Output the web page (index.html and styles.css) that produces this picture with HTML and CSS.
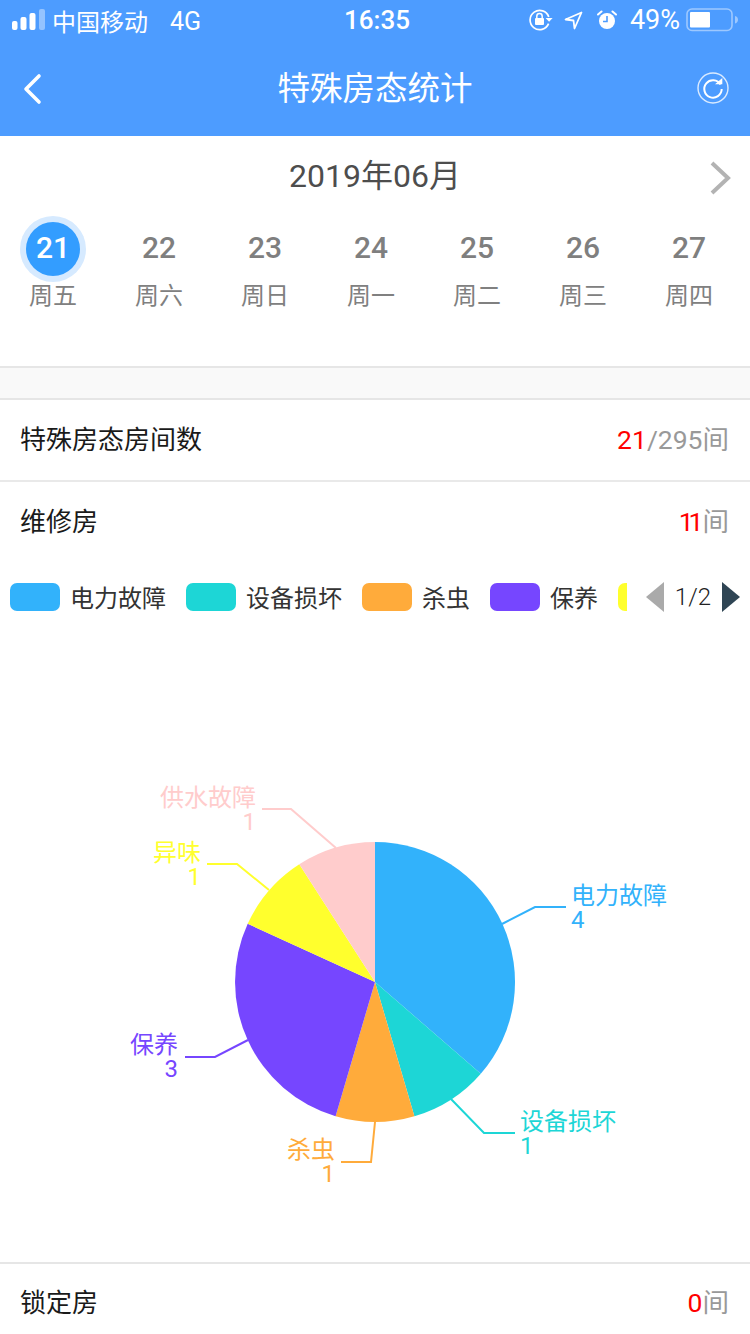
FILE: index.html
```html
<!DOCTYPE html>
<html lang="zh">
<head>
<meta charset="utf-8">
<title>特殊房态统计</title>
<link rel="stylesheet" href="styles.css">
</head>
<body>
<div class="page">
  <header class="header">
    <div class="status">
      <div class="status-left">
        <svg class="signal" width="34" height="22" viewBox="0 0 34 22">
          <rect x="0" y="12" width="5.5" height="9" rx="2" fill="#fff"/>
          <rect x="8.5" y="8" width="6" height="13" rx="2" fill="#fff"/>
          <rect x="17.5" y="4" width="6" height="17" rx="2" fill="#fff"/>
          <rect x="27" y="0" width="6" height="21" rx="2" fill="#fff" fill-opacity=".4"/>
        </svg>
        <span class="carrier">中国移动</span>
        <span class="net">4G</span>
      </div>
      <div class="time">16:35</div>
      <div class="status-right">
        <svg width="24" height="22" viewBox="0 0 24 22">
          <path d="M19.6 14.6A9.6 9.6 0 1 1 19.8 8" fill="none" stroke="#fff" stroke-width="1.7"/>
          <path d="M16.6 9h7l-3.5 3.8z" fill="#fff"/>
          <rect x="6" y="9" width="9" height="7" rx="1" fill="#fff"/>
          <path d="M7.8 9V7.2a2.7 2.7 0 0 1 5.4 0V9" fill="none" stroke="#fff" stroke-width="1.5"/>
        </svg>
        <svg class="ic-loc" width="19" height="19" viewBox="0 0 19 19">
          <path d="M17.5 1.5 1.500 8.500l8 1 1 8z" fill="none" stroke="#fff" stroke-width="1.8" stroke-linejoin="round"/>
        </svg>
        <svg class="ic-alarm" width="20" height="20" viewBox="0 0 20 20">
          <circle cx="10" cy="11" r="8" fill="#fff"/>
          <path d="M10 6v5.500H6" fill="none" stroke="#4d9cff" stroke-width="1.6"/>
          <path d="M1 4.500 4.500 1.500M19 4.500 15.500 1.500" stroke="#fff" stroke-width="2" stroke-linecap="round"/>
        </svg>
        <span class="pct">49%</span>
        <svg class="ic-batt" width="53" height="24" viewBox="0 0 53 24">
          <rect x="1" y="1" width="45" height="21.5" rx="5" fill="none" stroke="#fff" stroke-opacity=".45" stroke-width="1.6"/>
          <rect x="4" y="4" width="20" height="15.5" rx="1" fill="#fff"/>
          <path d="M49 8c2 .4 3 2 3 3.700s-1 3.300-3 3.700z" fill="#fff" fill-opacity=".45"/>
        </svg>
      </div>
    </div>
    <nav class="nav">
      <svg class="nav-back" width="20" height="34" viewBox="0 0 20 34">
        <path d="M17 4 4 17l13 13" fill="none" stroke="#fff" stroke-width="3.600" stroke-linecap="round" stroke-linejoin="round"/>
      </svg>
      <h1 class="nav-title">特殊房态统计</h1>
      <svg class="nav-refresh" width="32" height="32" viewBox="0 0 32 32">
        <circle cx="16" cy="16" r="15" fill="none" stroke="#fff" stroke-opacity=".8" stroke-width="1.400"/>
        <path d="M23.500 12.500A8.700 8.700 0 1 0 24.700 17" fill="none" stroke="#fff" stroke-width="2"/>
        <path d="M18 12.300h7.300V6z" fill="#fff"/>
      </svg>
    </nav>
  </header>

  <section class="calendar">
    <div class="month">
      <span class="month-label">2019年06月</span>
      <svg class="month-next" width="22" height="34" viewBox="0 0 22 34">
        <path d="M3 2l16 15L3 32" fill="none" stroke="#b3b3b3" stroke-width="4"/>
      </svg>
    </div>
    <div class="week">
      <div class="day"><span class="num num-on">21</span><span class="wd">周五</span></div>
      <div class="day"><span class="num">22</span><span class="wd">周六</span></div>
      <div class="day"><span class="num">23</span><span class="wd">周日</span></div>
      <div class="day"><span class="num">24</span><span class="wd">周一</span></div>
      <div class="day"><span class="num">25</span><span class="wd">周二</span></div>
      <div class="day"><span class="num">26</span><span class="wd">周三</span></div>
      <div class="day"><span class="num">27</span><span class="wd">周四</span></div>
    </div>
  </section>

  <div class="spacer"></div>

  <div class="row row-line">
    <span>特殊房态房间数</span>
    <span class="val"><em>21</em>/295间</span>
  </div>
  <div class="row">
    <span>维修房</span>
    <span class="val"><em class="ones">11</em>间</span>
  </div>

  <div class="legend">
    <div class="legend-items">
      <div class="lg"><i class="sw c-blue"></i>电力故障</div>
      <div class="lg"><i class="sw c-teal"></i>设备损坏</div>
      <div class="lg"><i class="sw c-orange"></i>杀虫</div>
      <div class="lg"><i class="sw c-purple"></i>保养</div>
      <div class="lg"><i class="sw c-yellow"></i>异味</div>
    </div>
    <div class="pager">
      <svg width="18" height="30" viewBox="0 0 18 30"><path d="M18 0v30L0 15z" fill="#aaa"/></svg>
      <span>1/2</span>
      <svg width="18" height="30" viewBox="0 0 18 30"><path d="M0 0v30l18-15z" fill="#2f4554"/></svg>
    </div>
  </div>

  <svg class="chart" width="750" height="651" viewBox="0 611 750 651">
    <g>
      <path d="M375 982V842A140 140 0 0 1 480.800 1073.700z" fill="#32b2fb"/>
      <path d="M375 982 480.800 1073.700A140 140 0 0 1 414.400 1116.300z" fill="#1dd6d6"/>
      <path d="M375 982 414.400 1116.300A140 140 0 0 1 335.600 1116.300z" fill="#ffab3b"/>
      <path d="M375 982 335.600 1116.300A140 140 0 0 1 247.700 923.800z" fill="#7646ff"/>
      <path d="M375 982 247.700 923.800A140 140 0 0 1 299.300 864.200z" fill="#ffff2d"/>
      <path d="M375 982 299.300 864.200A140 140 0 0 1 375 842z" fill="#ffcccc"/>
    </g>
    <g fill="none" stroke-width="2">
      <path d="M502 924 535 907H566" stroke="#32b2fb"/>
      <path d="M451 1099 484 1133H515" stroke="#1dd6d6"/>
      <path d="M375 1122 371 1162H341" stroke="#ffab3b"/>
      <path d="M248 1040 215 1057H185" stroke="#7646ff"/>
      <path d="M269 890 237 864H207" stroke="#ffff2d"/>
      <path d="M336 848 291 809H262" stroke="#ffcccc"/>
    </g>
    <g class="lbl">
      <text x="571" y="904" fill="#32b2fb">电力故障</text>
      <text x="571" y="928" fill="#32b2fb">4</text>
      <text x="520" y="1130" fill="#1dd6d6">设备损坏</text>
      <text x="520" y="1154" fill="#1dd6d6">1</text>
      <text x="335" y="1158" fill="#ffab3b" text-anchor="end">杀虫</text>
      <text x="335" y="1182" fill="#ffab3b" text-anchor="end">1</text>
      <text x="178" y="1053" fill="#7646ff" text-anchor="end">保养</text>
      <text x="178" y="1077" fill="#7646ff" text-anchor="end">3</text>
      <text x="201" y="861" fill="#ffff2d" text-anchor="end">异味</text>
      <text x="201" y="885" fill="#ffff2d" text-anchor="end">1</text>
      <text x="256" y="806" fill="#ffcccc" text-anchor="end">供水故障</text>
      <text x="256" y="830" fill="#ffcccc" text-anchor="end">1</text>
    </g>
  </svg>

  <div class="row row-top">
    <span>锁定房</span>
    <span class="val"><em>0</em>间</span>
  </div>
</div>
</body>
</html>
```

FILE: styles.css
```css
* { box-sizing: border-box; }
html, body { margin: 0; padding: 0; background: #fff; }
body { font-family: Roboto, "Noto Sans CJK SC", sans-serif; }
.page { width: 750px; height: 1334px; overflow: hidden; }

.header { background: #4d9cff; color: #fff; height: 136px; }
.status { height: 40px; display: grid; grid-template-columns: 1fr auto 1fr; align-items: center; padding: 0 15px 0 12px; font-size: 24px; }
.status-left { display: flex; align-items: center; }
.carrier { margin-left: 6px; }
.net { margin-left: 22px; font-size: 25px; margin-top: 2px; }
.time { font-weight: 500; font-size: 26px; margin-left: 7px; }
.status-right { display: flex; align-items: center; justify-content: flex-end; font-size: 27px; }
.ic-loc { margin-left: 11px; }
.ic-alarm { margin-left: 14px; }
.pct { margin-left: 13px; }
.ic-batt { margin-left: 6px; margin-right: -4px; }

.nav { height: 96px; display: flex; align-items: center; justify-content: space-between; padding: 0 21px 0 22px; position: relative; }
.nav-back { margin-top: 2px; }
.nav-title { position: absolute; left: 0; right: 0; top: 27px; margin: 0; text-align: center; font-size: 32.5px; line-height: 44px; font-weight: 400; }

.calendar { height: 230px; }
.month { height: 78px; padding-bottom: 4px; position: relative; display: flex; justify-content: center; align-items: center; }
.month-label { font-size: 32px; color: #4d4d4d; }
.month-next { position: absolute; right: 19px; top: 25px; }
.week { display: flex; }
.day { width: 106px; display: flex; flex-direction: column; align-items: center; }
.num { width: 54px; height: 54px; margin-top: 8px; padding-bottom: 3px; border-radius: 50%; display: flex; align-items: center; justify-content: center; font-size: 30px; font-weight: 500; color: #7f7f7f; }
.num-on { background: #339dff; color: #fff; box-shadow: 0 0 0 6px #d6eaff; }
.wd { font-size: 24px; line-height: 34px; color: #808080; margin-top: 3px; }

.spacer { height: 34px; background: #f9f9f9; border-top: 2px solid #e6e6e6; border-bottom: 2px solid #e6e6e6; }

.row { height: 80px; display: flex; justify-content: space-between; align-items: center; padding: 0 21px 6px 20px; font-size: 26px; color: #1a1a1a; }
.row-line { height: 82px; border-bottom: 2px solid #e9e9e9; }
.row-top { border-top: 2px solid #e6e6e6; }
.val { color: #999; font-size: 26.5px; font-weight: 400; }
.val em { color: #f00; font-style: normal; }
.val .ones { letter-spacing: -5px; margin-right: 4px; }

.legend { height: 49px; padding: 20px 10px 0; display: flex; align-items: center; justify-content: space-between; }
.legend-items { width: 617px; display: flex; gap: 20px; overflow: hidden; white-space: nowrap; font-size: 24px; color: #333; }
.lg { display: flex; align-items: center; flex: none; height: 30px; }
.sw { width: 50px; height: 28px; border-radius: 7px; margin-right: 10px; display: block; flex: none; }
.c-blue { background: #32b2fb; }
.c-teal { background: #1dd6d6; }
.c-orange { background: #ffab3b; }
.c-purple { background: #7646ff; }
.c-yellow { background: #ffff2d; }
.pager { display: flex; align-items: center; gap: 11px; font-size: 24px; font-weight: 300; color: #222; }

.chart { display: block; }
.lbl text { font-size: 24px; }
```
